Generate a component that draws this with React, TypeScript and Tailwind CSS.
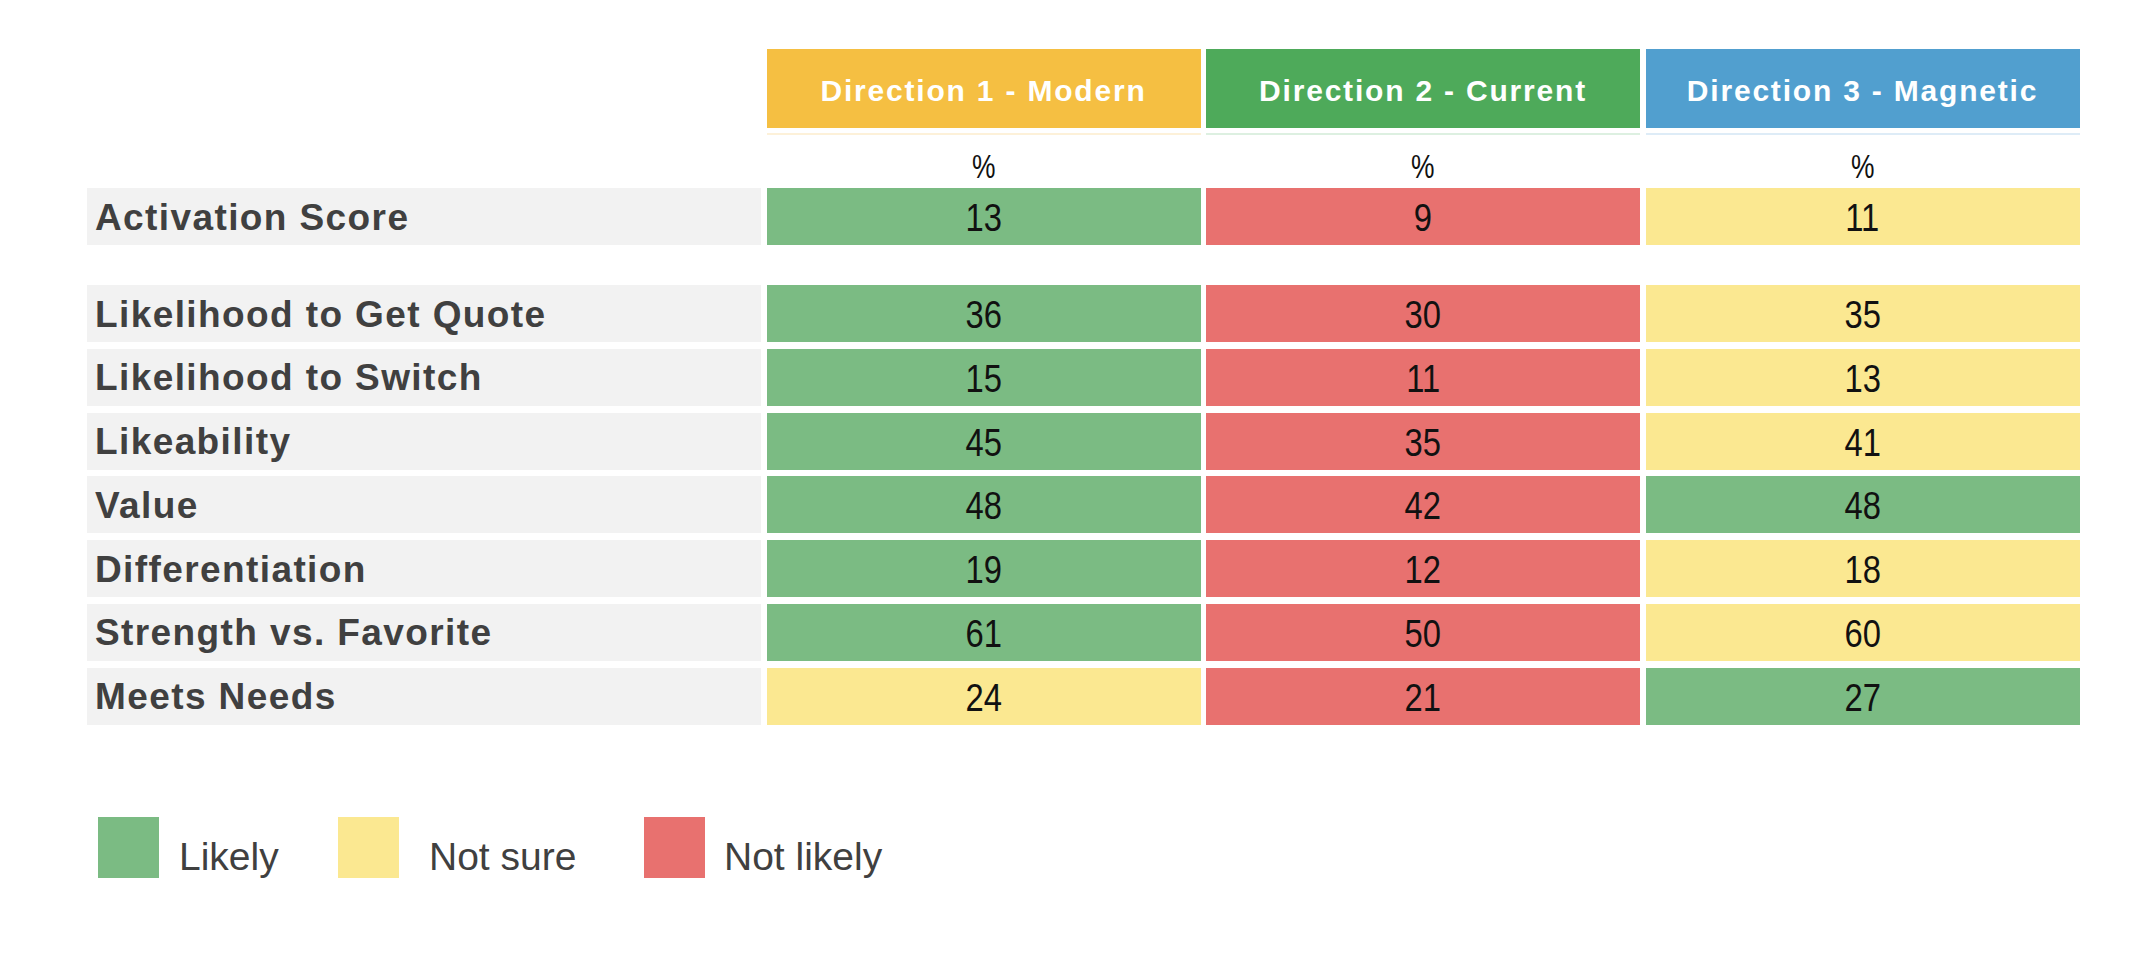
import React from "react";

type C = "g" | "r" | "y";
const cellBg: Record<C, string> = {
  g: "bg-[#7BBB83]",
  r: "bg-[#E8716F]",
  y: "bg-[#FBE891]",
};

const rows: { label: string; v: [number, C][] }[] = [
  { label: "Likelihood to Get Quote", v: [[36, "g"], [30, "r"], [35, "y"]] },
  { label: "Likelihood to Switch", v: [[15, "g"], [11, "r"], [13, "y"]] },
  { label: "Likeability", v: [[45, "g"], [35, "r"], [41, "y"]] },
  { label: "Value", v: [[48, "g"], [42, "r"], [48, "g"]] },
  { label: "Differentiation", v: [[19, "g"], [12, "r"], [18, "y"]] },
  { label: "Strength vs. Favorite", v: [[61, "g"], [50, "r"], [60, "y"]] },
  { label: "Meets Needs", v: [[24, "y"], [21, "r"], [27, "g"]] },
];

const labelFont = { fontFamily: '"Liberation Sans", Arial, sans-serif' };

function Num({ n }: { n: string | number }) {
  return (
    <span
      className="inline-block scale-x-[0.84] pt-[2px] text-[39px] leading-none text-[#111111]"
      style={labelFont}
    >
      {n}
    </span>
  );
}

function Row({ label, v }: { label: string; v: [number, C][] }) {
  return (
    <div className="flex h-[57px] gap-x-[5.5px]">
      <div className="flex w-[674px] items-center bg-[#F2F2F2] pl-[8px]">
        <span
          className="pt-[1px] text-[37px] font-bold leading-none tracking-[1.4px] text-[#404040]"
          style={labelFont}
        >
          {label}
        </span>
      </div>
      {v.map(([n, c], i) => (
        <div
          key={i}
          className={`flex w-[434px] items-center justify-center ${cellBg[c]}`}
        >
          <Num n={n} />
        </div>
      ))}
    </div>
  );
}

export default function App() {
  const headers = [
    { t: "Direction 1 - Modern", bg: "bg-[#F5BF42]", line: "bg-[#FDF1D9]" },
    { t: "Direction 2 - Current", bg: "bg-[#4EAA5A]", line: "bg-[#DDF0E1]" },
    { t: "Direction 3 - Magnetic", bg: "bg-[#519FCF]", line: "bg-[#DEECF7]" },
  ];
  return (
    <div className="min-h-[954px] w-[2148px] bg-white pl-[87px] pt-[49px]" style={labelFont}>
      {/* header */}
      <div className="flex h-[79px] gap-x-[5.5px]">
        <div className="w-[674px]" />
        {headers.map((h) => (
          <div
            key={h.t}
            className={`flex w-[434px] items-center justify-center ${h.bg}`}
          >
            <span className="pt-[4px] text-[30px] font-bold leading-none tracking-[1.8px] text-white">
              {h.t}
            </span>
          </div>
        ))}
      </div>
      <div className="mt-[5px] flex h-[2px] gap-x-[5.5px]">
        <div className="w-[674px]" />
        {headers.map((h) => (
          <div key={h.t} className={`w-[434px] ${h.line}`} />
        ))}
      </div>
      {/* % row */}
      <div className="flex h-[53px] gap-x-[5.5px]">
        <div className="w-[674px]" />
        {headers.map((h) => (
          <div key={h.t} className="flex w-[434px] items-center justify-center pt-[10px]">
            <span
              className="inline-block scale-x-[0.8] text-[33px] leading-none text-[#111111]"
              style={labelFont}
            >
              %
            </span>
          </div>
        ))}
      </div>
      <Row label="Activation Score" v={[[13, "g"], [9, "r"], [11, "y"]]} />
      <div className="mt-[40px] flex flex-col gap-y-[6.8px]">
        {rows.map((r) => (
          <Row key={r.label} label={r.label} v={r.v} />
        ))}
      </div>
      {/* legend */}
      <div className="mt-[92px] flex h-[61px] items-end pl-[11px]">
        <div className="flex w-[240px] items-end">
          <div className="h-[61px] w-[61px] bg-[#7BBB83]" />
          <span className="mb-[2px] ml-[20px] text-[39px] leading-none text-[#404040]">Likely</span>
        </div>
        <div className="flex w-[306px] items-end">
          <div className="h-[61px] w-[61px] bg-[#FBE891]" />
          <span className="mb-[2px] ml-[30px] text-[39px] leading-none text-[#404040]">Not sure</span>
        </div>
        <div className="flex items-end">
          <div className="h-[61px] w-[61px] bg-[#E8716F]" />
          <span className="mb-[2px] ml-[19px] text-[39px] leading-none text-[#404040]">Not likely</span>
        </div>
      </div>
    </div>
  );
}
